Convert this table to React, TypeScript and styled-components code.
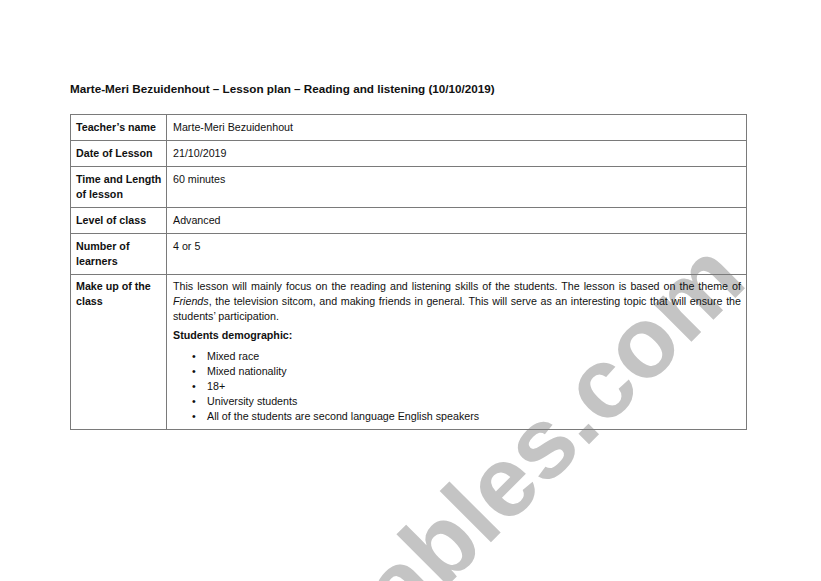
import React from "react";
import styled, { createGlobalStyle } from "styled-components";

const Global = createGlobalStyle`
  html, body {
    margin: 0;
    padding: 0;
    background: #ffffff;
    overflow: hidden;
  }
  body {
    font-family: "Liberation Sans", Arial, sans-serif;
    color: #111;
  }
`;

const Page = styled.div`
  position: relative;
  width: 821px;
  height: 581px;
  overflow: hidden;
  background: #fff;
`;

const Content = styled.div`
  position: relative;
  z-index: 1;
  padding: 82px 0 0 70px;
  width: 677px;
`;

const Title = styled.h1`
  margin: 0 0 18px 0;
  font-size: 11.7px;
  line-height: 14px;
  font-weight: 700;
  color: #111;
  white-space: nowrap;
`;

const Table = styled.div`
  display: grid;
  grid-template-columns: 96px 1fr;
  border-top: 1px solid #7a7a7a;
  border-left: 1px solid #7a7a7a;
`;

const Cell = styled.div<{ $label?: boolean; $tall?: boolean }>`
  border-right: 1px solid #7a7a7a;
  border-bottom: 1px solid #7a7a7a;
  padding: ${(p) => (p.$tall ? "4px" : "5px")} ${(p) => (p.$label ? "4px" : "5px")} 5px
    ${(p) => (p.$label ? "5px" : "6px")};
  font-size: 10.7px;
  line-height: 15px;
  font-weight: ${(p) => (p.$label ? 700 : 400)};
  color: #111;
`;

const Para = styled.p`
  margin: 0;
  text-align: justify;
`;

const SubHead = styled.p`
  margin: 4px 0 0 0;
  font-weight: 700;
`;

const List = styled.ul`
  margin: 6px 0 0 0;
  padding: 0 0 0 19px;
  list-style: none;
`;

const Item = styled.li`
  display: flex;
  line-height: 15px;
  &::before {
    content: "•";
    flex: 0 0 15px;
  }
`;

const Watermark = styled.div`
  position: absolute;
  z-index: 0;
  left: 88px;
  top: 825px;
  transform-origin: 0 0;
  transform: rotate(-45deg);
  white-space: nowrap;
  font-family: "Liberation Sans", Arial, sans-serif;
  font-weight: 700;
  font-size: 100px;
  line-height: 1;
  color: #c4c4c4;
`;

const rows: { label: string; value: string }[] = [
  { label: "Teacher’s name", value: "Marte-Meri Bezuidenhout" },
  { label: "Date of Lesson", value: "21/10/2019" },
  { label: "Time and Length of lesson", value: "60 minutes" },
  { label: "Level of class", value: "Advanced" },
  { label: "Number of learners", value: "4 or 5" },
];

const bullets = [
  "Mixed race",
  "Mixed nationality",
  "18+",
  "University students",
  "All of the students are second language English speakers",
];

export default function App() {
  return (
    <Page>
      <Global />
      <Watermark>eslprintables.com</Watermark>
      <Content>
        <Title>
          Marte-Meri Bezuidenhout – Lesson plan – Reading and listening (10/10/2019)
        </Title>
        <Table>
          {rows.map((r) => (
            <React.Fragment key={r.label}>
              <Cell $label>{r.label}</Cell>
              <Cell>{r.value}</Cell>
            </React.Fragment>
          ))}
          <Cell $label $tall>
            Make up of the class
          </Cell>
          <Cell $tall>
            <Para>
              This lesson will mainly focus on the reading and listening skills of the
              students. The lesson is based on the theme of <i>Friends</i>, the television
              sitcom, and making friends in general. This will serve as an interesting topic
              that will ensure the students’ participation.
            </Para>
            <SubHead>Students demographic:</SubHead>
            <List>
              {bullets.map((b) => (
                <Item key={b}>{b}</Item>
              ))}
            </List>
          </Cell>
        </Table>
      </Content>
    </Page>
  );
}
